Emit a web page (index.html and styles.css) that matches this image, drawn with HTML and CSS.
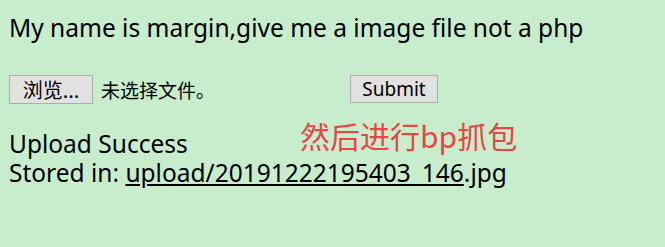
FILE: index.html
```html
<!DOCTYPE html>
<html lang="zh">
<head>
<meta charset="utf-8">
<link rel="stylesheet" href="styles.css">
</head>
<body>
<div class="page">
  <p class="intro">My name is margin,give me a image file not a php</p>
  <form class="upload-form">
    <span class="file-input">
      <span class="btn btn-browse">浏览...</span>
      <span class="file-status">未选择文件。</span>
    </span>
    <span class="btn btn-submit">Submit</span>
  </form>
  <div class="result">
    <div class="line">Upload Success</div>
    <div class="line">Stored in: <span class="link">upload/20191222195403_146</span>.jpg</div>
  </div>
  <div class="note">然后进行bp抓包</div>
</div>
</body>
</html>
```
FILE: styles.css
```css
html, body {
  margin: 0;
  padding: 0;
  background: #c7edcc;
}
.page {
  position: relative;
  width: 665px;
  height: 247px;
  padding: 0 9px;
  box-sizing: border-box;
  font-family: "Noto Sans", "Noto Sans CJK SC", sans-serif;
  color: #000;
}
.intro {
  margin: 0;
  padding-top: 12px;
  font-size: 24.5px;
  line-height: 32px;
}
.upload-form {
  display: flex;
  align-items: center;
  margin-top: 30px;
  height: 30px;
}
.file-input {
  display: flex;
  align-items: center;
  width: 341px;
}
.btn {
  display: flex;
  align-items: center;
  justify-content: center;
  box-sizing: border-box;
  background: #e1e1e1;
  border: 1px solid #adadad;
  font-size: 19px;
  height: 29px;
}
.btn-browse {
  width: 84px;
  font-size: 20px;
  font-family: "Noto Sans CJK SC", sans-serif;
}
.file-status {
  margin-left: 8px;
  font-size: 19px;
  font-family: "Noto Sans CJK SC", sans-serif;
}
.btn-submit {
  width: 88px;
  height: 28px;
}
.result {
  margin-top: 25px;
  font-size: 24.5px;
  line-height: 29px;
}
.link {
  text-decoration: underline;
}
.note {
  position: absolute;
  left: 300px;
  top: 113px;
  color: #e84545;
  font-size: 30px;
  line-height: 44px;
  font-family: "Noto Sans CJK SC", sans-serif;
}
```
